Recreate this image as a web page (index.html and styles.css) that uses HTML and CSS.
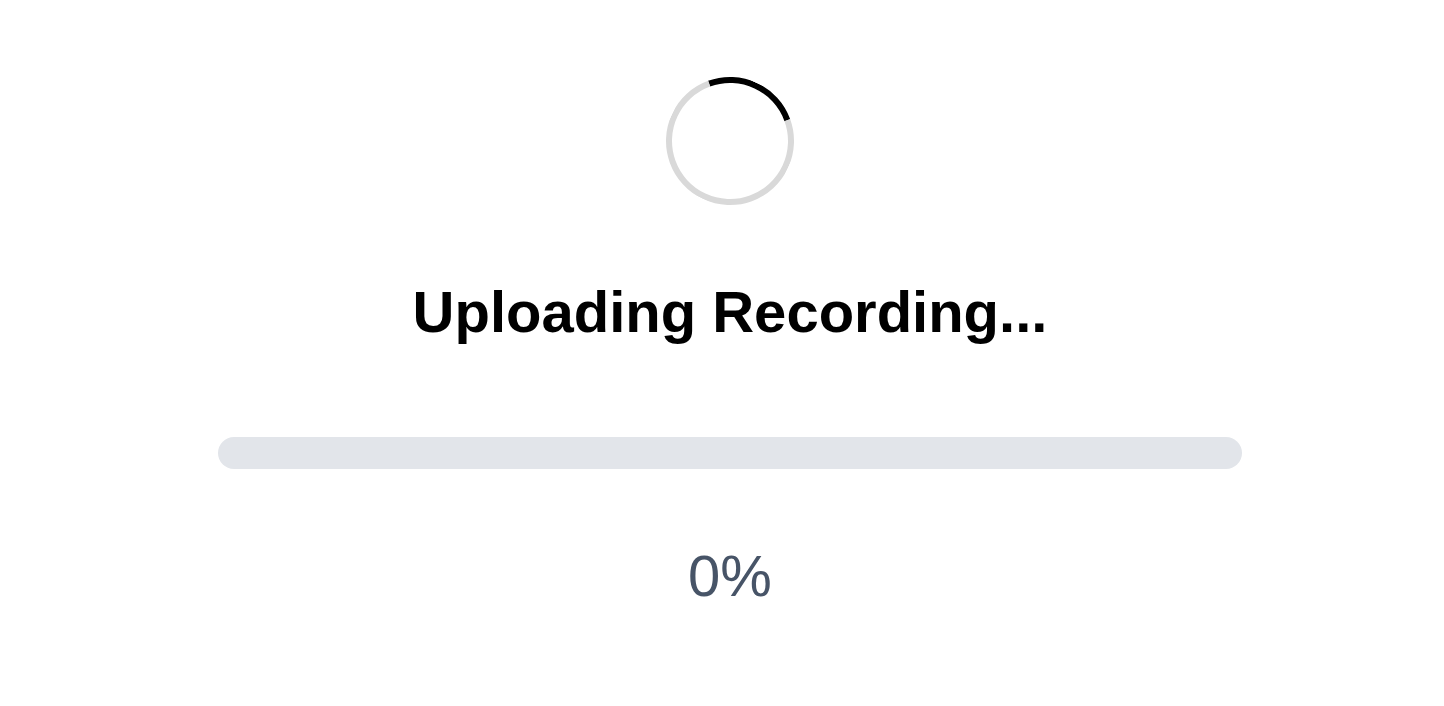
FILE: index.html
```html
<!DOCTYPE html>
<html lang="en">
<head>
  <meta charset="UTF-8" />
  <meta name="viewport" content="width=device-width, initial-scale=1.0"/>
  <title>Uploading Recording</title>
  <link rel="stylesheet" href="styles.css">
</head>
<body>
  <div class="upload">
    <!-- Spinner -->
    <div class="spinner"></div>

    <h1 class="upload-title">Uploading Recording...</h1>

    <!-- Progress -->
    <div class="progress">
      <div class="progress-fill" style="width: 0%;"></div>
    </div>

    <div class="progress-label">0%</div>
  </div>
</body>
</html>
```

FILE: styles.css
```css
* {
  box-sizing: border-box;
  margin: 0;
}

body {
  font-family: 'Liberation Sans', Arial, sans-serif;
  background: #ffffff;
  color: #0a0a0a;
}

.upload {
  display: flex;
  flex-direction: column;
  align-items: center;
  padding: 77px 0 0 16px;
}

.spinner {
  width: 128px;
  height: 128px;
  border: 6px solid #d9d9d9;
  border-top-color: #000000;
  border-radius: 50%;
  transform: rotate(25deg);
}

.upload-title {
  margin-top: 72px;
  font-size: 58px;
  line-height: 70px;
  font-weight: 700;
  color: #000000;
}

.progress {
  margin-top: 90px;
  width: 1024px;
  height: 32px;
  background: #e2e5ea;
  border-radius: 16px;
  overflow: hidden;
}

.progress-fill {
  height: 100%;
  background: #000000;
}

.progress-label {
  margin-top: 72px;
  font-size: 58px;
  line-height: 70px;
  color: #475467;
}
```
